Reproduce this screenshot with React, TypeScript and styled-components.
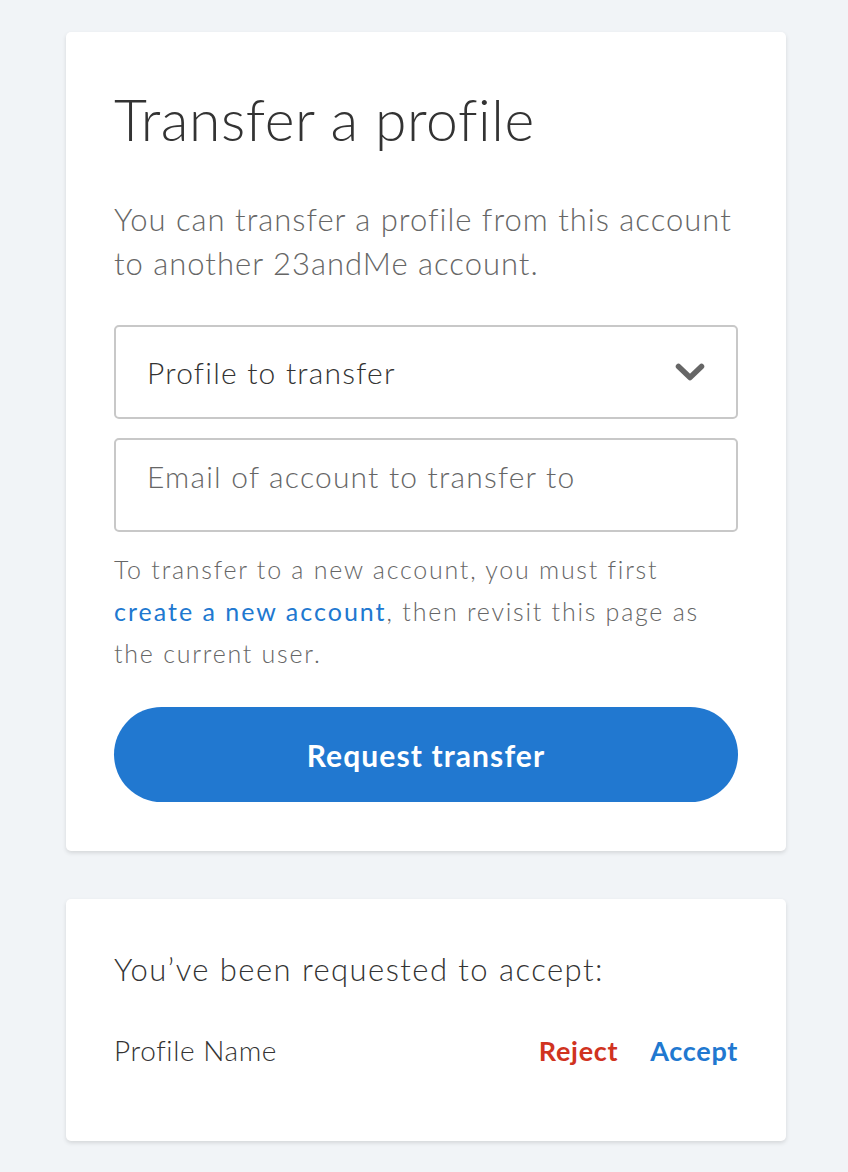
import React from 'react'
import styled, { createGlobalStyle } from 'styled-components'

const GlobalStyle = createGlobalStyle`
  html, body {
    margin: 0;
    padding: 0;
    background: #f1f4f7;
    font-family: Lato, "Noto Sans", sans-serif;
  }
  * { box-sizing: border-box; }
`

const Page = styled.div`
  min-height: 100vh;
  padding: 32px 62px 32px 66px;
  display: flex;
  flex-direction: column;
  gap: 48px;
`

const Card = styled.section<{ $pad?: string }>`
  width: 720px;
  background: #fff;
  border-radius: 5px;
  box-shadow: 0 2px 4px rgba(0, 0, 0, 0.12);
  padding: ${p => p.$pad || '55px 48px 49px'};
  display: flex;
  flex-direction: column;
`

const Title = styled.h1`
  margin: 0;
  font-weight: 300;
  font-size: 57px;
  line-height: 64px;
  color: #333;
  letter-spacing: 0.6px;
`

const Lead = styled.p`
  margin: 46px 0 40px;
  font-size: 31px;
  line-height: 44px;
  font-weight: 300;
  letter-spacing: 1px;
  color: #666;
`

const Field = styled.div<{ $placeholder?: boolean }>`
  height: 94px;
  border: 2px solid #c8c8c8;
  border-radius: 5px;
  padding: ${p => (p.$placeholder ? '0 31px 18px' : '0 31px')};
  display: flex;
  align-items: center;
  justify-content: space-between;
  font-size: 30px;
  line-height: 36px;
  font-weight: 300;
  letter-spacing: 1.2px;
  color: ${p => (p.$placeholder ? '#666' : '#333')};
  & + & {
    margin-top: 19px;
  }
`

const Help = styled.p`
  margin: 16px 0 33px;
  font-size: 25px;
  line-height: 42px;
  font-weight: 300;
  letter-spacing: 1.75px;
  color: #666;
`

const Link = styled.a`
  color: #2178d0;
  font-weight: 400;
  letter-spacing: 2px;
  text-decoration: none;
`

const PrimaryButton = styled.button`
  height: 95px;
  width: 100%;
  border: none;
  border-radius: 48px;
  background: #2178d0;
  color: #fff;
  font-family: inherit;
  font-size: 30px;
  font-weight: 700;
  letter-spacing: 1.1px;
  cursor: pointer;
`

const Subhead = styled.p`
  margin: 0;
  font-size: 31px;
  line-height: 40px;
  font-weight: 300;
  letter-spacing: 1.45px;
  color: #333;
`

const Row = styled.div`
  margin-top: 41px;
  display: flex;
  align-items: baseline;
  justify-content: space-between;
  font-size: 28px;
  line-height: 40px;
  font-weight: 300;
  letter-spacing: 0.6px;
  color: #333;
`

const Actions = styled.div`
  display: flex;
  align-items: baseline;
  gap: 32px;
`

const Action = styled.a<{ $tone: 'red' | 'blue' }>`
  font-size: 27px;
  font-weight: 700;
  letter-spacing: 0.7px;
  color: ${p => (p.$tone === 'red' ? '#d0331f' : '#2178d0')};
  text-decoration: none;
`

function Chevron() {
  return (
    <svg width="30" height="18" viewBox="0 0 30 18">
      <path d="M3.5 3.5 L15 14.5 L26.5 3.5" fill="none" stroke="#666" strokeWidth="5.5" strokeLinecap="round" strokeLinejoin="round" />
    </svg>
  )
}

export default function App() {
  return (
    <>
      <GlobalStyle />
      <Page>
        <Card>
          <Title>Transfer a profile</Title>
          <Lead>You can transfer a profile from this account to another 23andMe account.</Lead>
          <Field>
            Profile to transfer
            <Chevron />
          </Field>
          <Field $placeholder>Email of account to transfer to</Field>
          <Help>
            To transfer to a new account, you must first
            <br />
            <Link href="#">create a new account</Link>, then revisit this page as
            <br />
            the current user.
          </Help>
          <PrimaryButton>Request transfer</PrimaryButton>
        </Card>
        <Card $pad="50px 48px 70px">
          <Subhead>You’ve been requested to accept:</Subhead>
          <Row>
            Profile Name
            <Actions>
              <Action $tone="red" href="#">Reject</Action>
              <Action $tone="blue" href="#">Accept</Action>
            </Actions>
          </Row>
        </Card>
      </Page>
    </>
  )
}
